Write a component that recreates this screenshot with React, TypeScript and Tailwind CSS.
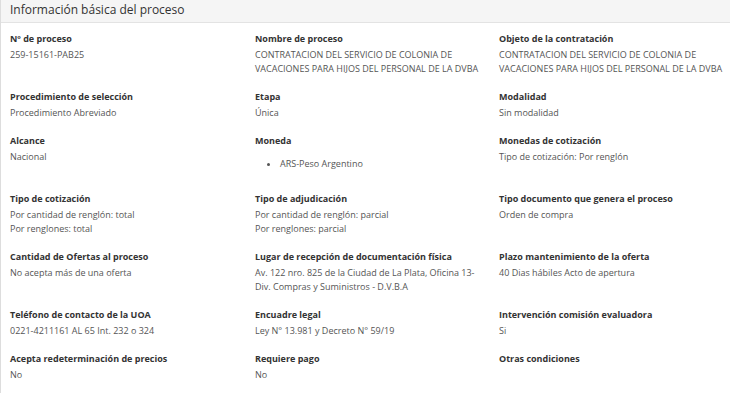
const rows: { label: string; value: React.ReactNode }[][] = [
  [
    { label: "Nº de proceso", value: "259-15161-PAB25" },
    {
      label: "Nombre de proceso",
      value: "CONTRATACION DEL SERVICIO DE COLONIA DE VACACIONES PARA HIJOS DEL PERSONAL DE LA DVBA",
    },
    {
      label: "Objeto de la contratación",
      value: "CONTRATACION DEL SERVICIO DE COLONIA DE VACACIONES PARA HIJOS DEL PERSONAL DE LA DVBA",
    },
  ],
  [
    { label: "Procedimiento de selección", value: "Procedimiento Abreviado" },
    { label: "Etapa", value: "Única" },
    { label: "Modalidad", value: "Sin modalidad" },
  ],
  [
    { label: "Alcance", value: "Nacional" },
    {
      label: "Moneda",
      value: (
        <ul className="my-[7px] list-disc pl-[25px]">
          <li>ARS-Peso Argentino</li>
        </ul>
      ),
    },
    { label: "Monedas de cotización", value: "Tipo de cotización: Por renglón" },
  ],
  [
    {
      label: "Tipo de cotización",
      value: (
        <>
          Por cantidad de renglón: total
          <br />
          Por renglones: total
        </>
      ),
    },
    {
      label: "Tipo de adjudicación",
      value: (
        <>
          Por cantidad de renglón: parcial
          <br />
          Por renglones: parcial
        </>
      ),
    },
    { label: "Tipo documento que genera el proceso", value: "Orden de compra" },
  ],
  [
    { label: "Cantidad de Ofertas al proceso", value: "No acepta más de una oferta" },
    {
      label: "Lugar de recepción de documentación física",
      value: "Av. 122 nro. 825 de la Ciudad de La Plata, Oficina 13- Div. Compras y Suministros - D.V.B.A",
    },
    { label: "Plazo mantenimiento de la oferta", value: "40 Dias hábiles Acto de apertura" },
  ],
  [
    { label: "Teléfono de contacto de la UOA", value: "0221-4211161 AL 65 Int. 232 o 324" },
    { label: "Encuadre legal", value: "Ley N° 13.981 y Decreto N° 59/19" },
    { label: "Intervención comisión evaluadora", value: "Si" },
  ],
  [
    { label: "Acepta redeterminación de precios", value: "No" },
    { label: "Requiere pago", value: "No" },
    { label: "Otras condiciones", value: "" },
  ],
];

export default function App() {
  return (
    <div
      className="w-[730px] h-[393px] overflow-hidden bg-white border-l border-[#dddddd] text-[#333]"
      style={{ fontFamily: '"Open Sans", sans-serif' }}
    >
      <div className="h-[23px] bg-[#f5f5f5] border-b border-[#e3e3e3] px-[9px] flex items-center">
        <h3 className="text-[12px] leading-[16px] text-[#333] -mt-[2px]">Información básica del proceso</h3>
      </div>
      <div className="pt-[7px] pl-[9px]">
        {rows.map((row, i) => (
          <div key={i} className="grid grid-cols-[245px_244px_1fr] pb-[12px]">
            {row.map((cell, j) => (
              <div key={cell.label} className={j === 1 ? "pr-[12px]" : "pr-[2px]"}>
                <div className="text-[9px] leading-[18px] font-bold text-[#333]">{cell.label}</div>
                <div className="text-[9px] leading-[14px] text-[#555]">{cell.value}</div>
              </div>
            ))}
          </div>
        ))}
      </div>
    </div>
  );
}
